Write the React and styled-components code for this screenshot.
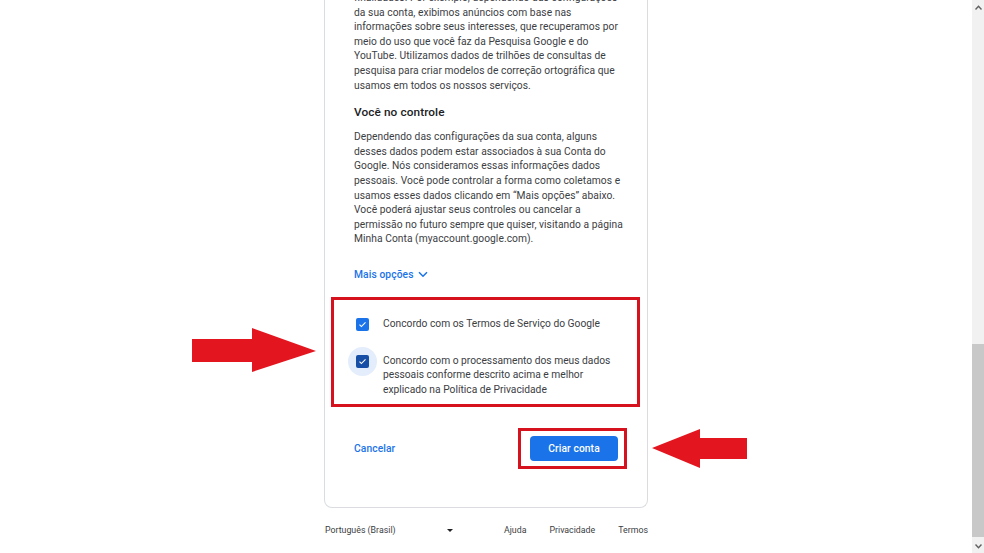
import React from "react";
import styled, { createGlobalStyle } from "styled-components";

const Global = createGlobalStyle`
  html, body { margin: 0; padding: 0; background: #fff; overflow: hidden; }
  body { font-family: Roboto, "Liberation Sans", Arial, sans-serif; }
`;

const Page = styled.div`
  position: relative;
  display: flex;
  width: 984px;
  height: 553px;
  overflow: hidden;
  background: #fff;
`;

const Main = styled.main`
  flex: 1;
  display: flex;
  flex-direction: column;
  align-items: center;
`;

const Card = styled.section`
  box-sizing: border-box;
  width: 324px;
  margin-top: -9px;
  padding: 0 29px 38px;
  border: 1px solid #dadce0;
  border-top: none;
  border-radius: 0 0 8px 8px;
  display: flex;
  flex-direction: column;
`;

const Para = styled.p`
  margin: ${(p) => p.$mt || 0}px 0 0;
  font-size: 10.25px;
  line-height: 14.6px;
  color: #3c4043;
  white-space: pre;
  letter-spacing: 0.05px;
`;

const Heading = styled.h2`
  margin: 10px 0 0;
  font-size: 11.8px;
  line-height: 18px;
  font-weight: 500;
  color: #202124;
  letter-spacing: 0.1px;
`;

const MoreLink = styled.a`
  margin-top: 20px;
  display: inline-flex;
  align-items: center;
  gap: 4px;
  align-self: flex-start;
  font-size: 10.25px;
  line-height: 16px;
  font-weight: 500;
  color: #1a73e8;
  letter-spacing: 0.1px;
`;

const RedFrame = styled.div`
  margin: 14px -22px 0 -23px;
  border: 3px solid #d5121e;
  padding: 17px 20px 7px 22px;
  display: flex;
  flex-direction: column;
  gap: 22px;
`;

const CheckRow = styled.label`
  display: flex;
  align-items: flex-start;
  gap: 14px;
`;

const BoxWrap = styled.span`
  position: relative;
  flex: none;
  width: 13px;
  height: 13px;
  margin-top: 1px;
  display: flex;
  align-items: center;
  justify-content: center;
  &::before {
    content: "";
    display: ${(p) => (p.$focus ? "block" : "none")};
    position: absolute;
    left: -8px;
    top: -8px;
    width: 29px;
    height: 29px;
    border-radius: 50%;
    background: #e4edfb;
  }
`;

const Box = styled.span`
  position: relative;
  width: 13px;
  height: 13px;
  border-radius: 2px;
  background: ${(p) => (p.$dark ? "#174ea6" : "#1a73e8")};
  display: flex;
  align-items: center;
  justify-content: center;
`;

const CheckText = styled.span`
  font-size: 10.25px;
  line-height: 14.6px;
  color: #3c4043;
  white-space: pre;
`;

const Actions = styled.div`
  margin-top: 21px;
  display: flex;
  align-items: center;
  justify-content: space-between;
`;

const TextButton = styled.a`
  font-size: 10.25px;
  font-weight: 500;
  color: #1a73e8;
  letter-spacing: 0.1px;
`;

const ButtonFrame = styled.div`
  margin-right: -9px;
  border: 3px solid #d5121e;
  padding: 5px 6px 5px 9px;
  display: flex;
`;

const PrimaryButton = styled.button`
  width: 88px;
  height: 25px;
  border: none;
  border-radius: 4px;
  background: #1a73e8;
  color: #fff;
  font-family: inherit;
  font-size: 10.25px;
  font-weight: 500;
  letter-spacing: 0.1px;
  padding: 0;
`;

const Footer = styled.footer`
  box-sizing: border-box;
  width: 324px;
  margin-top: 16px;
  padding-left: 1px;
  display: flex;
  align-items: center;
  font-size: 8.8px;
  line-height: 12px;
  color: #3c4043;
`;

const LangSelect = styled.div`
  width: 128px;
  display: flex;
  align-items: center;
  justify-content: space-between;
`;

const Caret = styled.span`
  width: 0;
  height: 0;
  border-left: 3.5px solid transparent;
  border-right: 3.5px solid transparent;
  border-top: 3.5px solid #202124;
`;

const FooterLinks = styled.nav`
  margin-left: auto;
  display: flex;
  gap: 23px;
`;

const Scrollbar = styled.div`
  width: 12px;
  background: #f1f1f1;
  display: flex;
  flex-direction: column;
  align-items: center;
`;

const ScrollArrow = styled.div`
  height: 14px;
  display: flex;
  align-items: center;
  justify-content: center;
`;

const Track = styled.div`
  flex: 1;
  width: 100%;
  display: flex;
  flex-direction: column;
`;

const Thumb = styled.div`
  margin-top: 330px;
  height: 193px;
  background: #c8c8c8;
`;

const Arrow = styled.svg`
  position: absolute;
  left: ${(p) => p.$x}px;
  top: ${(p) => p.$y}px;
`;

const Check = ({ focus, dark }) => (
  <BoxWrap $focus={focus}>
    <Box $dark={dark}>
      <svg width="9" height="9" viewBox="0 0 24 24">
        <path d="M4 12.5l5 5L20 6.5" fill="none" stroke="#fff" strokeWidth="3" />
      </svg>
    </Box>
  </BoxWrap>
);

export default function App() {
  return (
    <Page>
      <Global />
      <Main>
        <Card>
          <Para>
            {"finalidades. Por exemplo, dependendo das configurações\nda sua conta, exibimos anúncios com base nas\ninformações sobre seus interesses, que recuperamos por\nmeio do uso que você faz da Pesquisa Google e do\nYouTube. Utilizamos dados de trilhões de consultas de\npesquisa para criar modelos de correção ortográfica que\nusamos em todos os nossos serviços."}
          </Para>
          <Heading>Você no controle</Heading>
          <Para $mt={9}>
            {"Dependendo das configurações da sua conta, alguns\ndesses dados podem estar associados à sua Conta do\nGoogle. Nós consideramos essas informações dados\npessoais. Você pode controlar a forma como coletamos e\nusamos esses dados clicando em “Mais opções” abaixo.\nVocê poderá ajustar seus controles ou cancelar a\npermissão no futuro sempre que quiser, visitando a página\nMinha Conta (myaccount.google.com)."}
          </Para>
          <MoreLink>
            Mais opções
            <svg width="10" height="7" viewBox="0 0 10 7">
              <path d="M1 1.2l4 4 4-4" fill="none" stroke="#1a73e8" strokeWidth="1.5" />
            </svg>
          </MoreLink>
          <RedFrame>
            <CheckRow>
              <Check />
              <CheckText>Concordo com os Termos de Serviço do Google</CheckText>
            </CheckRow>
            <CheckRow>
              <Check focus dark />
              <CheckText>
                {"Concordo com o processamento dos meus dados\npessoais conforme descrito acima e melhor\nexplicado na Política de Privacidade"}
              </CheckText>
            </CheckRow>
          </RedFrame>
          <Actions>
            <TextButton>Cancelar</TextButton>
            <ButtonFrame>
              <PrimaryButton>Criar conta</PrimaryButton>
            </ButtonFrame>
          </Actions>
        </Card>
        <Footer>
          <LangSelect>
            <span>Português (Brasil)</span>
            <Caret />
          </LangSelect>
          <FooterLinks>
            <span>Ajuda</span>
            <span>Privacidade</span>
            <span>Termos</span>
          </FooterLinks>
        </Footer>
      </Main>
      <Scrollbar>
        <ScrollArrow>
          <svg width="7" height="5" viewBox="0 0 7 5">
            <path d="M0.5 4.5L3.5 1.2 6.5 4.5" fill="none" stroke="#606060" strokeWidth="1.4" />
          </svg>
        </ScrollArrow>
        <Track>
          <Thumb />
        </Track>
        <ScrollArrow>
          <svg width="7" height="5" viewBox="0 0 7 5">
            <path d="M0.5 0.5L3.5 3.8 6.5 0.5" fill="none" stroke="#606060" strokeWidth="1.4" />
          </svg>
        </ScrollArrow>
      </Scrollbar>
      <Arrow $x={192} $y={328} width="125" height="45" viewBox="0 0 125 45">
        <polygon points="0,11 60,11 60,0 124,23 60,44 60,34 0,34" fill="#e3161f" />
      </Arrow>
      <Arrow $x={652} $y={429} width="96" height="40" viewBox="0 0 96 40">
        <polygon points="0,19 48,0 48,9 95,9 95,30 48,30 48,39" fill="#e3161f" />
      </Arrow>
    </Page>
  );
}
